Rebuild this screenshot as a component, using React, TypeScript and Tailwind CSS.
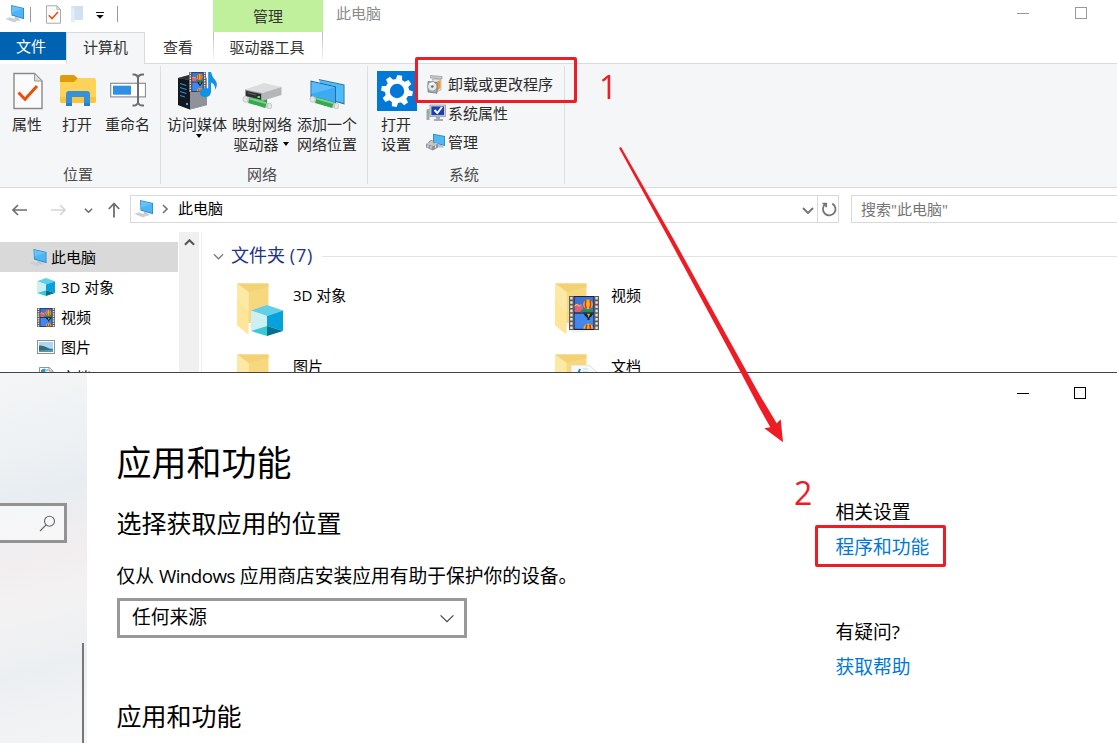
import type { ReactNode } from "react";

const FONT = "font-['Open_Sans','Noto_Sans_CJK_SC',sans-serif]";

function PcIcon({ className = "h-5 w-5" }: { className?: string }) {
  return (
    <svg viewBox="0 0 20 20" className={className}>
      <path d="M6 1 19 4V15.2L6.5 11.6Z" fill="#2f86c4" />
      <path d="M6.8 2 18.2 4.7V14L7.2 10.8Z" fill="#4db5f5" />
      <path d="M6.8 2 18.2 4.7 7.1 8.5Z" fill="#66c2f9" />
      <path d="M10 12.8 13.5 13.8V15L16 16 13.5 16.8 9.5 15Z" fill="#bcc5cc" />
      <path d="M0 14.8 4.5 13.2 13.5 16.3 8.8 18.6Z" fill="#d3dae0" />
      <path d="M2.4 14.8 10.6 17.7M4 14 12 16.9" stroke="#b3bdc5" strokeWidth=".5" />
    </svg>
  );
}

function CheckPage({ className }: { className: string }) {
  return (
    <svg viewBox="0 0 30 38" className={className}>
      <path d="M1 1.5H21.5L29 9V36.5H1Z" fill="#fbfbfb" stroke="#8a8a8a" strokeWidth="1.4" />
      <path d="M21.5 1.5V9H29Z" fill="#dedede" stroke="#9a9a9a" />
      <path d="M5.5 20.5 12 27.2 24 14" fill="none" stroke="#e8500e" strokeWidth="3" />
    </svg>
  );
}

function OpenFolder() {
  return (
    <svg viewBox="0 0 36 32" className="h-8 w-9">
      <path d="M0 2Q0 0 2 0H14L18 3.5V8H0Z" fill="#dd9c08" />
      <path d="M0 7H14L18 3H34Q36 3 36 5V26Q36 28 34 28H2Q0 28 0 26Z" fill="#ffd35a" />
      <path d="M0 22H36V26Q36 28 34 28H2Q0 28 0 26Z" fill="#fbc43f" />
      <path d="M6 31V19Q6 16 9 16H27Q30 16 30 19V31H24V22H12V31Z" fill="#3791d8" />
      <path d="M6 31V28H12V31ZM24 31V28H30V31Z" fill="#2c7fc3" />
    </svg>
  );
}

function RenameIcon() {
  return (
    <svg viewBox="0 0 36 34" className="h-[34px] w-9">
      <rect x=".7" y="10.3" width="34.8" height="13.6" fill="#fff" stroke="#8f8f8f" strokeWidth="1.2" />
      <rect x="3" y="12.7" width="18" height="9" fill="#2f8fe3" />
      <path d="M22.5 1.5Q27.5 1 28 5Q28.5 1 34 1.5M28 4V29M22.5 32.5Q27.5 33 28 29Q28.5 33 34 32.5" fill="none" stroke="#6d6d6d" strokeWidth="2" />
    </svg>
  );
}

function Film({ className }: { className: string }) {
  return (
    <svg viewBox="0 0 30 34" preserveAspectRatio="none" className={className}>
      <rect width="30" height="34" fill="#5c5c5c" />
      <path d="M2.4 1V34M27.6 1V34" stroke="#e4e4e4" strokeWidth="2.4" strokeDasharray="2.6 1.6" />
      <rect x="5" y="0" width="20" height="34" fill="#1b2437" />
      <rect x="5.6" y="1" width="18.8" height="15.2" fill="#3b73d6" />
      <rect x="5.6" y="17.6" width="18.8" height="15.2" fill="#4287ee" />
      <path d="M5.6 8.5 9 7.5 11 9 14 10V16.2H5.6Z" fill="#e0607a" />
      <path d="M5.6 10 8 8.3 10 10.5 12 8.5" stroke="#ffd34d" fill="none" />
      <path d="M13 13.5 24.4 14V16.2H11Z" fill="#1b914e" />
      <circle cx="19" cy="8.4" r="4.8" fill="#f4b41c" />
      <path d="M17 4.2Q15.5 9 17.5 12.5M21 4.2Q22.5 9 20.5 12.5" stroke="#cf2b20" strokeWidth="1.5" fill="none" />
      <path d="M14.6 17.6H24.3Q23 21 20.5 22V24H18.5V22Q16 21 14.6 17.6Z" fill="#17202f" />
      <path d="M18 17.8 19.6 21.4 21.2 17.8Z" fill="#e3a91b" />
      <path d="M14.4 32.8Q15 27.6 19.2 27.4Q23.5 27.6 24.4 32.8Z" fill="#f4b41c" />
      <path d="M17 32.8 17.8 28.5M21.5 32.8 20.8 28.5" stroke="#cf2b20" strokeWidth="1.6" />
    </svg>
  );
}

function MediaIcon() {
  return (
    <div className="relative h-10 w-10">
      <svg viewBox="0 0 40 40" className="h-10 w-10">
        <path d="M1 6 12 3 30 6V33L13 37.5 1 33Z" fill="#83868c" />
        <path d="M1 6 13 8V37.5L1 33Z" fill="#14171b" />
        <path d="M13 8 30 6V33L13 37.5Z" fill="#8f9298" />
        <path d="M1 6 12 3 20 4 13 8Z" fill="#2d3136" />
        <path d="M3 11.5 9.5 13.5M3 15.5 9.5 17.5M3 19.5 9.5 21.5M3 23.5 8 25" stroke="#2c8ae0" strokeWidth="1.2" />
        <circle cx="10" cy="32" r="1.2" fill="#21b5e8" />
      </svg>
      <Film className="absolute top-0 left-3 h-[20px] w-[17px]" />
      <svg viewBox="0 0 18 26" className="absolute top-0 left-[23px] h-[26px] w-[18px]">
        <path d="M8.2 0H11Q12 5 15.5 8.5Q18.5 12.5 15 18Q15.6 12 11 10.5V20Q10.5 25 5.5 25Q0 25 0 20.8Q0 16 6 16Q7.5 16 8.2 16.5Z" fill="#1192e4" />
      </svg>
    </div>
  );
}

function CableParts() {
  return (
    <>
      <path d="M4 24.5 29 31.5" stroke="#c8d0cd" strokeWidth="5" />
      <path d="M7 25 24 30" stroke="#35a852" strokeWidth="6" />
      <path d="M8 23.6 24 28.2" stroke="#7ed58c" strokeWidth="1.8" />
      <ellipse cx="3.5" cy="24.3" rx="2.6" ry="3" fill="#e2e6e6" stroke="#b1b8b8" strokeWidth=".6" />
      <ellipse cx="27.5" cy="31" rx="2.2" ry="3" fill="#e2e6e6" stroke="#b1b8b8" strokeWidth=".6" />
    </>
  );
}

function NetDriveIcon() {
  return (
    <svg viewBox="0 0 40 34" className="mt-[3px] h-[34px] w-10">
      <path d="M17 24 25 22V29L18 29Z" fill="#1ca54b" />
      <path d="M3 14.5 22 8 39.5 12 20 18Z" fill="#dcdddf" />
      <path d="M20 18 39.5 12V20L20 26Z" fill="#b4b6ba" />
      <path d="M3 14.5 20 18V26L3 21.5Z" fill="#9a9c9f" />
      <path d="M4 15.7 19 19V24.8L4 21Z" fill="#2c2e2f" />
      <path d="M5.5 18 14 20" stroke="#6d7070" strokeWidth=".8" />
      <rect x="15.5" y="21" width="2.5" height="2" fill="#50e052" />
      <CableParts />
    </svg>
  );
}

function NetPlaceIcon() {
  return (
    <svg viewBox="0 0 36 34" className="mt-[3px] h-[34px] w-9">
      <path d="M9.5 4 35.5 9.5V29.5L27 27Z" fill="#2b6f9e" />
      <path d="M10.5 5 34.6 10.3V28L12 22Z" fill="#4fbcfa" />
      <path d="M1.5 5.5 27 11.5V30.8L1.5 23.8Z" fill="#215f8e" />
      <path d="M2.5 6.8 26.2 12.3V29.5L2.5 23Z" fill="#3eaaf6" />
      <path d="M2.5 6.8 26.2 12.3 2.5 19Z" fill="#58bbfa" />
      <path d="M15 26 21 27.5V31H15Z" fill="#1ca54b" />
      <CableParts />
    </svg>
  );
}

const TEETH = [0, 45, 90, 135, 180, 225, 270, 315];

function GearIcon() {
  return (
    <svg viewBox="0 0 40 40" className="h-10 w-10">
      <rect width="40" height="40" fill="#0078d7" />
      <g transform="translate(20 20)">
        {TEETH.map((a) => (
          <path key={a} d="M-3.4-10 -2.4-15.8H2.4L3.4-10Z" fill="#fff" transform={`rotate(${a + 10})`} />
        ))}
        <circle r="9.6" fill="none" stroke="#fff" strokeWidth="4.8" />
      </g>
    </svg>
  );
}

function UninstallIcon() {
  return (
    <svg viewBox="0 0 18 20" className="h-5 w-[18px]">
      <path d="M4.5 1.5 16 2.5V5L4.5 4Z" fill="#c7c9cb" stroke="#8c8f91" strokeWidth=".6" />
      <path d="M6.5 5 15 5.5V16L9 18.5Z" fill="#e9e7e4" stroke="#9b9b9b" strokeWidth=".6" />
      <path d="M10 8 14.5 6V14L11 17Z" fill="#ed9b42" />
      <path d="M2 7.5 11 8.5V19.2L2 18Z" fill="#a9b0b5" stroke="#666b6e" strokeWidth=".7" />
      <circle cx="6.3" cy="12.5" r="4.6" fill="#dfe8ed" stroke="#7e8b92" strokeWidth=".7" />
      <path d="M6.3 12.5 3 9.2 8 8.2Z" fill="#fff" />
      <circle cx="6.3" cy="12.5" r="1.3" fill="#5b6870" />
    </svg>
  );
}

function SysPropIcon() {
  return (
    <svg viewBox="0 0 20 18" className="h-[18px] w-5">
      <path d="M.5 5.5 3.5 4.8V16H.5Z" fill="#a2a7aa" />
      <rect x="1" y="7" width="1.4" height="2" fill="#42cf48" />
      <rect x="4" y="1" width="15.5" height="11.7" fill="#d8dadd" stroke="#8c9094" strokeWidth=".7" />
      <rect x="5.4" y="2.4" width="12.7" height="8.8" fill="#1b3fb5" />
      <path d="M8.5 6 11.3 9 16 3" stroke="#fff" strokeWidth="2" fill="none" />
      <path d="M10 13H14V15H17V17H8V15H10Z" fill="#a8acaf" />
    </svg>
  );
}

function ManageIcon() {
  return (
    <svg viewBox="0 0 20 18" className="h-[18px] w-5">
      <path d="M7 .8 19 3V13L7 10Z" fill="#2c86c4" />
      <path d="M7.8 1.8 18.2 3.8V12L7.8 9.2Z" fill="#51b8f4" />
      <path d="M11 12H16L18 14.5H12Z" fill="#bac0c4" />
      <path d="M0 11 4 8.5 12 10.5V14.5L7 17.5 0 14.5Z" fill="#90959a" />
      <path d="M0 11 4 8.5 12 10.5 7.3 13Z" fill="#c5c9cc" />
      <path d="M3 9.5Q4 6.5 8 8.5V10.5" stroke="#777c80" fill="none" />
      <path d="M2 12V14.5M5 13V15.5M9.5 12.4V14.6" stroke="#eef0f1" />
    </svg>
  );
}

function CubeIcon({ className }: { className: string }) {
  return (
    <svg viewBox="0 0 32 31" preserveAspectRatio="none" className={className}>
      <path d="M16 0 32 5.5 16 11 0 5.5Z" fill="#5fd0e8" />
      <path d="M0 5.5 16 11V21L0 26Z" fill="#cdf1f3" />
      <path d="M16 11 32 5.5V26L16 21Z" fill="#07a2dc" />
      <path d="M0 26 16 21V31Z" fill="#38c9d6" />
      <path d="M16 21 32 26 16 31Z" fill="#04718e" />
    </svg>
  );
}

function PictureIcon() {
  return (
    <svg viewBox="0 0 18 14" className="h-[14px] w-[18px]">
      <rect x=".5" y=".5" width="17" height="13" fill="#fff" stroke="#8d9499" />
      <rect x="2" y="2" width="14" height="10" fill="#a9d7f5" />
      <path d="M2 5.5Q6 5 9 7T16 9V12H2Z" fill="#3c6c65" />
      <path d="M2 10.5 16 9.5V12H2Z" fill="#4e94c5" />
    </svg>
  );
}

function DocIcon() {
  return (
    <svg viewBox="0 0 18 20" className="h-5 w-[18px]">
      <path d="M2.5 .5H12L16 4V19H2.5Z" fill="#fff" stroke="#8d9499" />
      <path d="M12 .5V4H16" fill="none" stroke="#8d9499" />
      <path d="M4.5 5V3L8 2V5ZM9 3H11" fill="#2f93cf" stroke="#2f93cf" />
    </svg>
  );
}

function FolderArt({ children }: { children?: ReactNode }) {
  return (
    <div className="relative h-[54px] w-12 shrink-0">
      <svg viewBox="0 0 48 54" className="h-[54px] w-12">
        <path d="M11 42 20 38 46 47 18 50Z" fill="#f2f2f2" />
        <path d="M0 .5H31.5V40H11Z" fill="#f7d87e" />
        <path d="M1 .5H31.5V4L11 9Z" fill="#f3d275" />
        <path d="M0 .5 11.5 9V37V51.5L0 42.5Z" fill="#ffe598" />
        <path d="M0 .5 11.5 9V30L0 15Z" fill="#fde9a6" />
      </svg>
      {children}
    </div>
  );
}

function Chevron({ className, d = "M1 1 6 6 11 1", w = 1.3 }: { className: string; d?: string; w?: number }) {
  return (
    <svg viewBox="0 0 12 7" className={className}>
      <path d={d} fill="none" stroke="currentColor" strokeWidth={w} />
    </svg>
  );
}

function Controls({ className, gap }: { className: string; gap: string }) {
  return (
    <div className={`flex items-center ${gap} ${className}`}>
      <div className="h-px w-3 bg-current" />
      <div className="h-3 w-3 border border-current" />
    </div>
  );
}

function RibbonButton({ icon, lines, width, arrow }: { icon: ReactNode; lines: string[]; width: string; arrow?: "below" | "inline" }) {
  return (
    <div className={`flex flex-col items-center ${width}`}>
      <div className="flex h-[42px] items-start justify-center">{icon}</div>
      {lines.map((l, i) => (
        <div key={l} className="flex h-5 items-center whitespace-nowrap leading-5">
          {l}
          {arrow === "inline" && i === lines.length - 1 && (
            <div className="mr-0.5 ml-1 border-x-[3.5px] border-t-[4px] border-x-transparent border-t-black" />
          )}
        </div>
      ))}
      {arrow === "below" && <div className="ml-1 border-x-[3.5px] border-t-[4px] border-x-transparent border-t-black" />}
    </div>
  );
}

function Group({ label, width, className, children }: { label: string; width: string; className: string; children: ReactNode }) {
  return (
    <div className={`flex h-[123px] flex-col justify-between pt-2 pb-[3px] ${width}`}>
      <div className={`flex ${className}`}>{children}</div>
      <div className="pr-1 text-center leading-5 text-[#4a4a4a]">{label}</div>
    </div>
  );
}

function Separator() {
  return <div className="mt-0.5 h-[118px] w-px bg-[#dedfe0]" />;
}

function TreeRow({ icon, label, className }: { icon: ReactNode; label: string; className: string }) {
  return (
    <div className={`flex h-[30px] shrink-0 items-center ${className}`}>
      {icon}
      <span className="leading-5">{label}</span>
    </div>
  );
}

function FolderItem({ label, children }: { label: string; children?: ReactNode }) {
  return (
    <div className="flex h-[71px] w-[318px] shrink-0">
      <FolderArt>{children}</FolderArt>
      <span className="mt-[2px] ml-2 leading-5">{label}</span>
    </div>
  );
}

function Explorer() {
  return (
    <section className="flex h-[372px] flex-col overflow-hidden bg-white text-[15px] text-black">
      <header className="flex h-16 shrink-0">
        <div className="flex w-[213px] flex-col">
          <div className="flex h-8 items-start">
            <PcIcon className="mt-1 ml-[5px] h-5 w-5" />
            <div className="mt-[7px] ml-[5px] h-[15px] w-px bg-[#999]" />
            <CheckPage className="mt-[5px] ml-[14px] h-[19px] w-[17px]" />
            <svg viewBox="0 0 14 18" className="mt-1.5 ml-[9px] h-[18px] w-3.5">
              <path d="M0 0H12V14H3.5L0 16Z" fill="#d2e1f2" />
              <path d="M0 0 3.5 3V17.5L0 15Z" fill="#e3edf8" />
            </svg>
            <svg viewBox="0 0 8 7" className="mt-3 ml-[11px] h-[7px] w-2">
              <path d="M0 .5H8" stroke="#111" />
              <path d="M.3 3H7.7L4 6.7Z" fill="#111" />
            </svg>
            <div className="mt-1.5 ml-[13px] h-4 w-px bg-[#999]" />
          </div>
          <div className="flex h-8">
            <div className="flex h-7 w-[66px] items-center justify-center bg-[#0063b1] pr-1 text-white">文件</div>
            <div className="flex h-8 w-[79px] items-center justify-center border-x border-t border-[#dadbdc] bg-[#f5f6f7] pb-0.5 text-[#333]">
              计算机
            </div>
            <div className="flex h-8 w-[68px] items-center justify-center border-b border-[#dadbdc] pr-0.5 pb-px text-[#333]">查看</div>
          </div>
        </div>
        <div className="flex w-[110px] flex-col border-b border-[#dadbdc]">
          <div className="flex h-8 items-center justify-center bg-[#c1f09d] text-[#333]">管理</div>
          <div className="flex h-[31px] items-center justify-center text-[#333]">
            <div className="h-full w-px bg-gradient-to-b from-[#bbb] to-white" />
            <div className="flex-1 pr-0.5 text-center">驱动器工具</div>
            <div className="h-full w-px bg-gradient-to-b from-[#bbb] to-white" />
          </div>
        </div>
        <div className="flex flex-1 justify-between border-b border-[#dadbdc] pr-[30px] pl-[13px] text-[#8b8b8b]">
          <span className="mt-[3px] leading-5">此电脑</span>
          <Controls gap="gap-[46px]" className="mt-[7px] h-3 text-[#999]" />
        </div>
      </header>

      <div className="flex h-[124px] shrink-0 border-b border-[#dadbdc] bg-[#f5f6f7] text-[#2b2b2b]">
        <Group label="位置" width="w-[160px]" className="pl-0.5">
          <RibbonButton width="w-[50px]" icon={<div className="ml-0.5"><CheckPage className="h-[38px] w-[30px]" /></div>} lines={["属性"]} />
          <RibbonButton width="w-[50px]" icon={<div className="mt-[3px] ml-0.5"><OpenFolder /></div>} lines={["打开"]} />
          <RibbonButton width="w-[51px]" icon={<div className="mt-[1px]"><RenameIcon /></div>} lines={["重命名"]} />
        </Group>
        <Separator />
        <Group label="网络" width="w-[206px]" className="gap-px pl-1">
          <RibbonButton width="w-16" arrow="below" icon={<MediaIcon />} lines={["访问媒体"]} />
          <RibbonButton width="w-16" arrow="inline" icon={<NetDriveIcon />} lines={["映射网络", "驱动器"]} />
          <RibbonButton width="w-16" icon={<NetPlaceIcon />} lines={["添加一个", "网络位置"]} />
        </Group>
        <Separator />
        <Group label="系统" width="w-[196px]" className="pl-[8px]">
          <RibbonButton width="w-10" icon={<div className="-mt-px ml-px"><GearIcon /></div>} lines={["打开", "设置"]} />
          <div className="-mt-[3px] flex flex-col pl-[10px]">
            {[
              { icon: <UninstallIcon />, label: "卸载或更改程序" },
              { icon: <SysPropIcon />, label: "系统属性" },
              { icon: <ManageIcon />, label: "管理" },
            ].map((row) => (
              <div key={row.label} className="flex h-[29px] items-center">
                <div className="flex w-[22px]">{row.icon}</div>
                <span className="leading-5">{row.label}</span>
              </div>
            ))}
          </div>
        </Group>
        <Separator />
      </div>

      <div className="flex h-11 shrink-0 items-start pt-[7px]">
        <div className="flex h-7 w-[130px] items-center pt-0.5 text-[#6e6e6e]">
          <svg viewBox="0 0 16 12" className="ml-3 h-3 w-4" fill="none" stroke="currentColor" strokeWidth="1.6">
            <path d="M15 6H1M6 1 1 6 6 11" />
          </svg>
          <svg viewBox="0 0 16 12" className="ml-[22px] h-3 w-4 text-[#d5d5d5]" fill="none" stroke="currentColor" strokeWidth="1.6">
            <path d="M1 6H15M10 1 15 6 10 11" />
          </svg>
          <Chevron className="ml-[18px] h-[5px] w-[9px]" w={2.2} />
          <svg viewBox="0 0 12 16" className="ml-[15px] h-4 w-3" fill="none" stroke="currentColor" strokeWidth="1.8">
            <path d="M6 15.5V1.5M.8 7 6 1.5 11.2 7" />
          </svg>
        </div>
        <div className="flex h-7 w-[709px] items-center border border-[#d9d9d9]">
          <PcIcon className="ml-[3px] h-5 w-5" />
          <svg viewBox="0 0 6 10" className="ml-[8px] h-[10px] w-[6px]" fill="none" stroke="#777" strokeWidth="1.7">
            <path d="M1 1 5 5 1 9" />
          </svg>
          <span className="ml-[10px] pb-0.5 leading-5">此电脑</span>
          <Chevron className="mt-0.5 ml-auto h-[7px] w-3 text-[#777]" w={2} />
          <div className="ml-[3px] h-full w-px bg-[#d9d9d9]" />
          <svg viewBox="0 0 16 16" className="mr-px ml-[3px] h-4 w-4" fill="none" stroke="#757575" strokeWidth="1.8">
            <path d="M11.3 2.6A6.3 6.3 0 1 1 4 3.4M1.5 2.6H5.2V6.3" />
          </svg>
        </div>
        <div className="ml-3 flex h-7 flex-1 items-center border-y border-l border-[#d9d9d9] pl-[9px] text-[#757575]">
          搜索"此电脑"
        </div>
      </div>

      <div className="flex h-[140px] overflow-hidden">
        <nav className="flex w-[179px] flex-col pt-2.5 pr-px">
          <TreeRow className="gap-[3px] bg-[#d9d9d9] pl-[27px]" icon={<PcIcon className="mt-0.5 h-5 w-[21px]" />} label="此电脑" />
          <TreeRow className="gap-1.5 pl-[37px]" icon={<CubeIcon className="h-[18px] w-[18px]" />} label="3D 对象" />
          <TreeRow className="gap-1.5 pl-[37px]" icon={<Film className="h-[19px] w-[18px]" />} label="视频" />
          <TreeRow className="gap-1.5 pl-[37px]" icon={<PictureIcon />} label="图片" />
          <TreeRow className="gap-1.5 pl-[37px]" icon={<DocIcon />} label="文档" />
        </nav>
        <div className="flex w-5 justify-center bg-[#f0f0f0] pt-[7px] text-[#555]">
          <Chevron className="h-[7px] w-[11px]" d="M1 6 6 1 11 6" w={2.2} />
        </div>
        <div className="ml-0.5 w-px bg-[#f0f0f0]" />
        <main className="flex flex-1 flex-col">
          <div className="flex h-[49px] shrink-0 items-center pl-[11px]">
            <Chevron className="h-[7px] w-[11px] text-[#777]" />
            <span className="ml-[7px] pb-[3px] text-[18px] leading-6 text-[#1e3287]">
              文件夹 <span className="tracking-[0.9px]">(7)</span>
            </span>
            <div className="ml-[9px] h-px flex-1 bg-[#e2e2e2]" />
          </div>
          <div className="flex shrink-0 flex-wrap pt-0.5 pl-[35px]">
            <FolderItem label="3D 对象">
              <CubeIcon className="absolute top-[22px] left-[14px] h-[31px] w-8" />
            </FolderItem>
            <FolderItem label="视频">
              <Film className="absolute top-[13px] left-[14px] h-[34px] w-[30px]" />
            </FolderItem>
            <div className="w-20" />
            <FolderItem label="图片" />
            <FolderItem label="文档">
              <svg viewBox="0 0 26 20" className="absolute top-[11px] left-4 h-5 w-[26px]">
                <path d="M0 0H18L26 7V20H0Z" fill="#f7f8f8" stroke="#dcdcdc" />
                <path d="M7 9 9 4" stroke="#1888d0" strokeWidth="2" />
                <path d="M12 4H17M12 7H17" stroke="#b7dceb" />
              </svg>
            </FolderItem>
          </div>
        </main>
      </div>
    </section>
  );
}

function Settings() {
  return (
    <section className="flex h-[371px] overflow-hidden border-t border-[#444] bg-white text-[18.75px] text-black">
      <aside className="flex w-[87px] flex-col bg-[linear-gradient(165deg,#f4f5f6_0%,#edf1f4_22%,#e8edf1_33%,#f2eeef_50%,#f3f2f3_62%,#eceff2_78%,#f3f4f5_100%)]">
        <div className="mt-[130px] flex h-10 w-[67px] items-center justify-end border-y-[3px] border-r-[3px] border-[#939393] bg-white/50 pr-2">
          <svg viewBox="0 0 17 17" className="h-[17px] w-[17px]" fill="none" stroke="#666" strokeWidth="1.1">
            <circle cx="10.5" cy="6.2" r="5" />
            <path d="M7 10 1 16" />
          </svg>
        </div>
        <div className="mt-[100px] mr-[3px] ml-auto w-[2px] flex-1 bg-[#777]" />
      </aside>
      <main className="flex w-[748.5px] flex-col pl-[29.5px]">
        <h1 className="mt-[66px] text-[35px] leading-[48px]">应用和功能</h1>
        <h2 className="mt-[19px] text-[25px] leading-[34px]">选择获取应用的位置</h2>
        <p className="mt-[23px] leading-[26px]">
          仅从 <span className="tracking-[-0.55px]">Windows</span> 应用商店安装应用有助于保护你的设备。
        </p>
        <div className="mt-[9px] ml-[0.5px] flex h-10 w-[350px] items-center justify-between border-[3px] border-[#999] pr-[9px] pl-3">
          <span className="pb-0.5 leading-6">任何来源</span>
          <Chevron className="h-[9px] w-4 text-[#444]" w={0.9} />
        </div>
        <h2 className="mt-[61px] text-[25px] leading-[34px]">应用和功能</h2>
      </main>
      <aside className="flex flex-1 flex-col">
        <Controls gap="gap-[45px]" className="mt-[14px] mr-[31px] ml-auto h-3 text-black" />
        <div className="mt-[100px] leading-[26px]">相关设置</div>
        <a className="mt-[9px] leading-[26px] text-[#0078d7]">程序和功能</a>
        <div className="mt-[59px] leading-[26px]">有疑问?</div>
        <a className="mt-[9px] leading-[26px] text-[#0078d7]">获取帮助</a>
      </aside>
    </section>
  );
}

function Annotations() {
  return (
    <div className="pointer-events-none absolute inset-0 text-[32px] leading-8 text-[#ee1c25]">
      <div className="absolute top-[57px] left-[415px] h-[46px] w-[162px] rounded-xs border-[3px] border-[#ee1c25]" />
      <span className="absolute top-[71px] left-[599px]">1</span>
      <svg viewBox="0 0 1117 743" className="absolute inset-0 h-full w-full">
        <path
          d="M619 148 621 147 674 240 730 341.5 760 395.5 776.7 423.3 780.7 419.3 783 442.3 764.3 428.3 770.3 427.3 760 409 730 352 669.5 240Z"
          fill="#ee1c25"
        />
      </svg>
      <span className="absolute top-[477px] left-[794px]">2</span>
      <div className="absolute top-[525px] left-[815px] h-[42px] w-[131px] rounded-xs border-[3px] border-[#ee1c25]" />
    </div>
  );
}

export default function App() {
  return (
    <div className={`relative h-[743px] w-[1117px] overflow-hidden bg-white ${FONT}`}>
      <Explorer />
      <Settings />
      <Annotations />
    </div>
  );
}
